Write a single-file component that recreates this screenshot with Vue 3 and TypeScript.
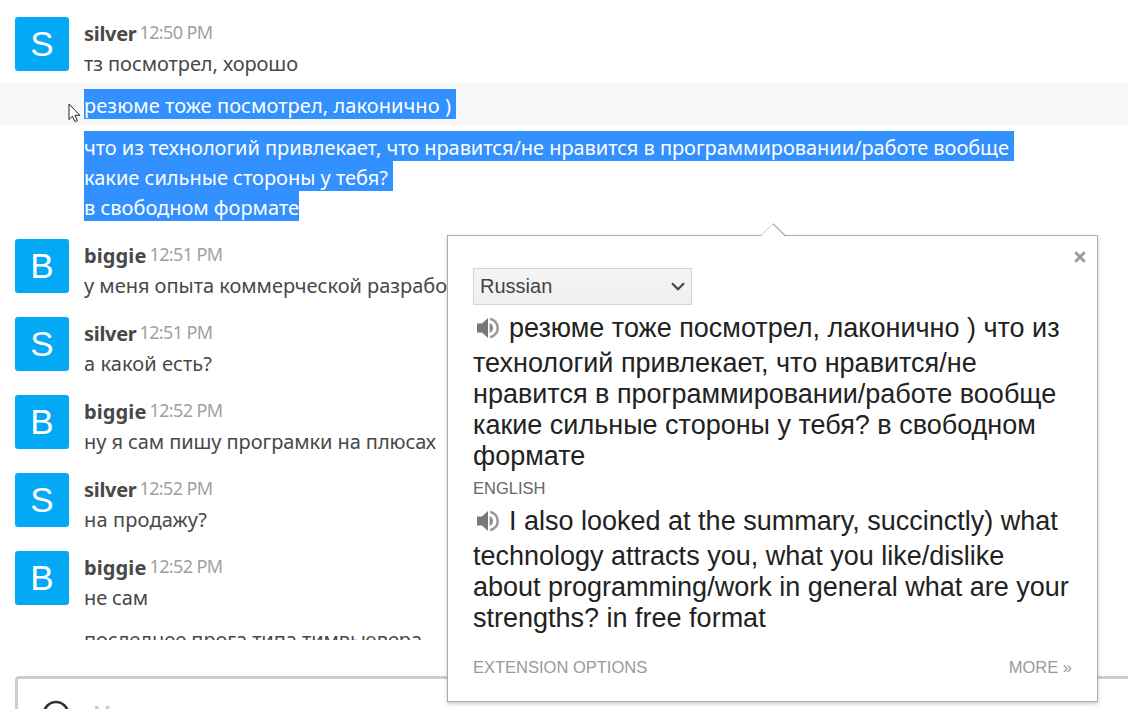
<script setup lang="ts">
import type { Directive } from 'vue'

interface Line {
  text: string
  width: number
  tail?: boolean
}

interface Message {
  id: number
  author?: 'silver' | 'biggie'
  time?: string
  hovered?: boolean
  selected?: boolean
  lines: Line[]
}

const messages: Message[] = [
  { id: 1, author: 'silver', time: '12:50 PM', lines: [{ text: 'тз посмотрел, хорошо', width: 214 }] },
  { id: 2, hovered: true, selected: true, lines: [{ text: 'резюме тоже посмотрел, лаконично )', width: 367, tail: true }] },
  {
    id: 3,
    selected: true,
    lines: [
      {
        text: 'что из технологий привлекает, что нравится/не нравится в программировании/работе вообще',
        width: 925,
        tail: true,
      },
      { text: 'какие сильные стороны у тебя?', width: 304, tail: true },
      { text: 'в свободном формате', width: 215 },
    ],
  },
  { id: 4, author: 'biggie', time: '12:51 PM', lines: [{ text: 'у меня опыта коммерческой разрабо', width: 363 }] },
  { id: 5, author: 'silver', time: '12:51 PM', lines: [{ text: 'а какой есть?', width: 128 }] },
  { id: 6, author: 'biggie', time: '12:52 PM', lines: [{ text: 'ну я сам пишу програмки на плюсах', width: 352 }] },
  { id: 7, author: 'silver', time: '12:52 PM', lines: [{ text: 'на продажу?', width: 123 }] },
  { id: 8, author: 'biggie', time: '12:52 PM', lines: [{ text: 'не сам', width: 64 }] },
  { id: 9, lines: [{ text: 'последнее прога типа тимвьювера', width: 338 }] },
]

const nameWidths = { silver: 52.5, biggie: 62.5 }

// spreads letter spacing so the text takes exactly the given width
const vFit: Directive<HTMLElement, number> = {
  mounted(el, { value }) {
    const natural = el.getBoundingClientRect().width
    const count = (el.textContent ?? '').length
    el.style.letterSpacing = `${(value - natural) / count}px`
  },
}
</script>

<template>
  <div class="chat">
    <div class="messages">
      <div
        v-for="message in messages"
        :key="message.id"
        class="message"
        :class="{ titled: message.author, hovered: message.hovered, selected: message.selected }"
      >
        <div class="gutter">
          <div v-if="message.author" class="avatar">{{ message.author[0].toUpperCase() }}</div>
        </div>
        <div class="body">
          <div v-if="message.author" class="title">
            <span v-fit="nameWidths[message.author]" class="name">{{ message.author }}</span>
            <span v-fit="73" class="time">{{ message.time }}</span>
          </div>
          <div v-for="line in message.lines" :key="line.text" class="line">
            <span class="mark" :class="{ tail: line.tail }"><span v-fit="line.width" class="text">{{ line.text }}</span></span>
          </div>
        </div>
      </div>
    </div>

    <div class="composer">
      <svg class="smile" viewBox="0 0 28 28">
        <circle cx="14" cy="14" r="12" fill="none" stroke="#333" stroke-width="2.6" />
        <circle cx="10" cy="11" r="1.6" fill="#333" />
        <circle cx="18" cy="11" r="1.6" fill="#333" />
        <path d="M8 16c2 5 10 5 12 0" fill="none" stroke="#333" stroke-width="2" />
      </svg>
      <span class="placeholder">Message</span>
    </div>

    <svg class="cursor" viewBox="0 0 13 20">
      <path d="M1 1v15.5l3.4-3.3 2.5 5.4 2.5-1.1-2.4-5.2h4.8z" fill="#fff" stroke="#222" stroke-width="1" />
    </svg>

    <div class="popup">
      <svg class="arrow" viewBox="0 0 26 14">
        <path d="M0.5 14L13 1l12.5 13z" fill="#fff" />
        <path d="M0.5 13L13 0.7" fill="none" stroke="#ccc" />
        <path d="M13 0.7L25.5 13" fill="none" stroke="#aaa" stroke-width="1.2" />
      </svg>
      <svg class="close" viewBox="0 0 12 12">
        <path d="M1.3 1.3l9.4 9.4M10.7 1.3l-9.4 9.4" stroke="#999" stroke-width="2.8" />
      </svg>
      <div class="select">
        <span>Russian</span>
        <svg viewBox="0 0 14 9">
          <path d="M1 1.2l6 6 6-6" fill="none" stroke="#444" stroke-width="2.1" />
        </svg>
      </div>
      <p class="translation">
        <span class="first">
          <svg class="speaker" viewBox="0 0 22 22">
            <path d="M0 6.6h5L11 1v20l-6-5.6H0z" fill="#777" />
            <path d="M12.6 6c4.6 2 4.6 8 0 10z" fill="#8a8a8a" />
            <path d="M13.2 1.8c10 3.2 10 15.2 0 18.4" fill="none" stroke="#999" stroke-width="2.5" />
          </svg>
          резюме тоже посмотрел, лаконично ) что из</span>
        технологий привлекает, что нравится/не<br />
        нравится в программировании/работе вообще<br />
        какие сильные стороны у тебя? в свободном<br />
        формате
      </p>
      <div class="language">ENGLISH</div>
      <p class="translation">
        <span class="first">
          <svg class="speaker" viewBox="0 0 22 22">
            <path d="M0 6.6h5L11 1v20l-6-5.6H0z" fill="#777" />
            <path d="M12.6 6c4.6 2 4.6 8 0 10z" fill="#8a8a8a" />
            <path d="M13.2 1.8c10 3.2 10 15.2 0 18.4" fill="none" stroke="#999" stroke-width="2.5" />
          </svg>
          I also looked at the summary, succinctly) what</span>
        technology attracts you, what you like/dislike<br />
        about programming/work in general what are your<br />
        strengths? in free format
      </p>
      <div class="links">
        <span>EXTENSION OPTIONS</span>
        <span>MORE »</span>
      </div>
    </div>
  </div>
</template>

<style>
body {
  margin: 0;
  background: #fff;
  overflow: hidden;
}
</style>

<style scoped>
.chat {
  position: relative;
  display: flex;
  flex-direction: column;
  width: 1128px;
  height: 709px;
  overflow: hidden;
  font-family: "Noto Sans", "Open Sans", sans-serif;
  color: #484848;
}

.messages {
  height: 635px;
  padding-top: 5px;
  flex-shrink: 0;
  overflow: hidden;
}

.message {
  display: flex;
  padding: 6px 0 6px 15px;
}

.message.titled {
  padding-top: 12px;
}

.message.hovered {
  background: #f5f7f9;
}

.gutter {
  width: 69px;
  flex-shrink: 0;
}

.avatar {
  width: 54px;
  height: 54px;
  margin-bottom: -54px;
  border-radius: 3px;
  background: #03a9f4;
  color: #fff;
  font: 35px/54px "Liberation Sans", Arial, sans-serif;
  text-align: center;
}

.title {
  display: flex;
  gap: 3px;
  height: 30px;
  line-height: 34px;
  white-space: nowrap;
}

.name {
  font-size: 20px;
  font-weight: 700;
}

.time {
  font-size: 18px;
  line-height: 31px;
  color: #a0a0a0;
}

.line {
  display: flex;
  height: 30px;
  font-size: 20px;
  line-height: 34px;
  white-space: nowrap;
}

.mark {
  height: 30px;
}

.selected .mark {
  background: #3390ff;
  color: #fff;
}

.selected .tail {
  padding-right: 5px;
}

.text {
  display: inline-block;
}

.composer {
  display: flex;
  align-items: flex-start;
  gap: 23px;
  height: 80px;
  flex-shrink: 0;
  margin: 36px -10px 0 15px;
  padding: 21px 0 0 24px;
  border: 3px solid #cbced1;
  border-radius: 4px;
  box-sizing: border-box;
}

.smile {
  width: 28px;
  height: 28px;
}

.placeholder {
  font-size: 20px;
  line-height: 26px;
  color: #c4c6c9;
}

.cursor {
  position: absolute;
  left: 68px;
  top: 103px;
  width: 13px;
  height: 20px;
}

.popup {
  position: absolute;
  left: 447px;
  top: 235px;
  width: 651px;
  height: 467px;
  box-sizing: border-box;
  padding: 32px 25px 0;
  border: 1px solid #aaa;
  background: #fff;
  box-shadow: 0 2px 4px rgba(0, 0, 0, 0.2);
  font-family: "Liberation Sans", Arial, sans-serif;
  color: #222;
}

.arrow {
  position: absolute;
  left: 312px;
  top: -13px;
  width: 26px;
  height: 14px;
}

.close {
  position: absolute;
  right: 11px;
  top: 15px;
  width: 12px;
  height: 12px;
}

.select {
  display: flex;
  align-items: center;
  justify-content: space-between;
  width: 219px;
  height: 37px;
  box-sizing: border-box;
  padding: 0 6px;
  border: 1px solid #d4d4d4;
  background: linear-gradient(#f5f5f5, #efefef);
  font-size: 20px;
  color: #444;
}

.select svg {
  width: 14px;
  height: 9px;
}

.translation {
  margin: 0;
  font-size: 27px;
  line-height: 31px;
  white-space: nowrap;
}

.first {
  display: flex;
  align-items: center;
  gap: 10px;
  height: 38px;
  padding: 9px 0 0 4px;
  box-sizing: border-box;
  margin-bottom: 5px;
}

.speaker {
  width: 22px;
  height: 22px;
  margin-top: -2px;
}

.language {
  height: 26px;
  font-size: 16.5px;
  line-height: 33px;
  color: #666;
}

.links {
  display: flex;
  justify-content: space-between;
  margin-top: 23px;
  font-size: 16.5px;
  line-height: 20px;
  color: #999;
}
</style>
